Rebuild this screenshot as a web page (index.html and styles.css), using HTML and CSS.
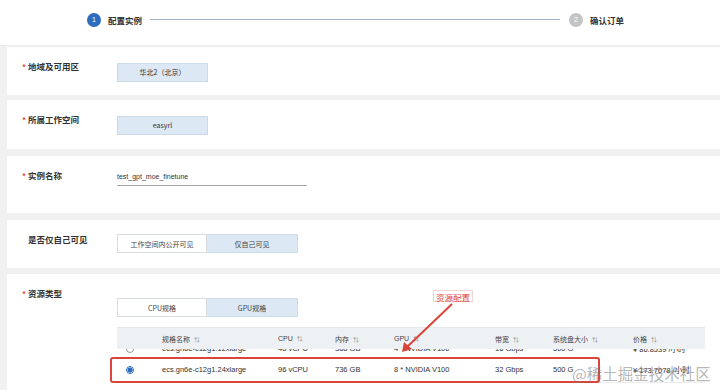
FILE: index.html
```html
<!DOCTYPE html>
<html lang="zh-CN">
<head>
  <meta charset="UTF-8" />
  <title>配置实例</title>
  <link rel="stylesheet" href="styles.css">
</head>
<body>
  <div class="steps">
    <div class="step active"><span class="step-num">1</span><span class="step-text">配置实例</span></div>
    <div class="step-line"></div>
    <div class="step"><span class="step-num">2</span><span class="step-text">确认订单</span></div>
  </div>

  <div class="form">
    <div class="panel p-region">
      <div class="label"><i>*</i>地域及可用区</div>
      <div class="field"><button class="pick">华北2（北京）</button></div>
    </div>

    <div class="panel p-space">
      <div class="label"><i>*</i>所属工作空间</div>
      <div class="field"><button class="pick">easyrl</button></div>
    </div>

    <div class="panel p-name">
      <div class="label"><i>*</i>实例名称</div>
      <div class="field"><div class="text-input">test_gpt_moe_finetune</div></div>
    </div>

    <div class="panel p-visible">
      <div class="label">是否仅自己可见</div>
      <div class="field">
        <div class="segment">
          <button>工作空间内公开可见</button>
          <button class="on">仅自己可见</button>
        </div>
      </div>
    </div>

    <div class="panel p-res">
      <div class="label"><i>*</i>资源类型</div>
      <div class="field res-field">
        <div class="segment">
          <button>CPU规格</button>
          <button class="on">GPU规格</button>
        </div>
        <div class="spec-table">
          <div class="row head">
            <span></span>
            <span>规格名称 <em>⇅</em></span>
            <span>CPU <em>⇅</em></span>
            <span>内存 <em>⇅</em></span>
            <span>GPU <em>⇅</em></span>
            <span>带宽 <em>⇅</em></span>
            <span>系统盘大小 <em>⇅</em></span>
            <span>价格 <em>⇅</em></span>
          </div>
          <div class="clip">
            <div class="row">
              <span><b class="radio"></b></span>
              <span>ecs.gn6e-c12g1.12xlarge</span>
              <span>48 vCPU</span>
              <span>368 GB</span>
              <span>4 * NVIDIA V100</span>
              <span>16 Gbps</span>
              <span>500 G</span>
              <span>¥ 86.8539 /小时</span>
            </div>
          </div>
          <div class="row">
            <span><b class="radio checked"></b></span>
            <span>ecs.gn6e-c12g1.24xlarge</span>
            <span>96 vCPU</span>
            <span>736 GB</span>
            <span>8 * NVIDIA V100</span>
            <span>32 Gbps</span>
            <span>500 G</span>
            <span>¥ 173.7078 /小时</span>
          </div>
          <div class="row"></div>
        </div>
      </div>
    </div>
  </div>

  <!-- annotation layer -->
  <div class="mark-box"></div>
  <div class="mark-tag">资源配置</div>
  <svg class="mark-arrow" width="720" height="390" viewBox="0 0 720 390">
    <line x1="452" y1="304" x2="407" y2="347" stroke="#d8453a" stroke-width="2" />
    <polygon points="402,352 404,342 412,349" fill="#d8453a" />
  </svg>
  <div class="watermark">@稀土掘金技术社区</div>
</body>
</html>
```

FILE: styles.css
```css
* { margin: 0; padding: 0; box-sizing: border-box; }
body {
  font-family: "Liberation Sans", "Noto Sans CJK SC", sans-serif;
  background: #f1f1f1;
  color: #333;
  width: 720px;
  height: 390px;
  overflow: hidden;
}
button { font-family: inherit; cursor: pointer; }

.steps {
  height: 46px;
  background: #fff;
  display: flex;
  align-items: center;
  padding: 0 0 6px 87px;
  border-bottom: 1px solid #ececec;
}
.step { display: flex; align-items: center; gap: 7px; }
.step-num {
  width: 14px; height: 14px; border-radius: 50%;
  background: #c4c4c4; color: #fff;
  font-size: 7px; line-height: 14px; text-align: center;
}
.step.active .step-num { background: #2c6cbf; }
.step-text {
  font-family: "Noto Sans CJK SC", sans-serif;
  font-size: 8.5px; font-weight: 700; color: #333;
}
.step-line {
  width: 410px; height: 1px; background: #9fb3cc;
  margin: 0 9px 0 8px;
}

.form {
  padding: 1px 0 0 7px;
  display: flex;
  flex-direction: column;
}
.panel {
  background: #fff;
  display: flex;
  padding: 14px 0 0 15px;
}
.p-region { height: 48px; }
.p-space { height: 49px; margin-top: 5px; }
.p-name { height: 57px; margin-top: 7px; }
.p-visible { height: 48px; margin-top: 7px; }
.p-res { height: 120px; margin-top: 6px; }

.label {
  width: 95px;
  font-family: "Noto Sans CJK SC", sans-serif;
  font-size: 8.5px;
  font-weight: 700;
  line-height: 11px;
  color: #333;
  padding-left: 6px;
  position: relative;
}
.label i {
  position: absolute; left: 0; top: 0;
  font-style: normal; color: #e04848; font-size: 8px;
}

.pick {
  width: 91px; height: 19px;
  background: #dce8f4;
  border: 1px solid #cbd9e8;
  font-family: "Noto Sans CJK SC", sans-serif;
  font-size: 7px; color: #333;
}

.text-input {
  width: 190px;
  margin-top: 3px;
  padding-bottom: 5px;
  border-bottom: 1px solid #a4a4a4;
  font-size: 7px;
  color: #333;
}

.segment { display: flex; }
.segment button {
  width: 90px; height: 19px;
  background: #fff;
  border: 1px solid #d8dde3;
  font-family: "Noto Sans CJK SC", sans-serif;
  font-size: 7px; color: #444;
}
.segment button + button { border-left: none; width: 91px; }
.segment button.on { background: #dce8f4; border-color: #cfdbe7; }

.res-field { padding-top: 10px; }
.spec-table {
  width: 588px;
  margin-top: 10px;
  border-top: 1px solid #e4e7eb;
  font-size: 7.5px;
  color: #333;
}
.row {
  display: grid;
  grid-template-columns: 45px 116px 57px 59px 101px 58px 80px 1fr;
  align-items: center;
  height: 26px;
  border-bottom: 1px solid #eceef1;
  background: #fff;
}
.row.head {
  height: 21px;
  background: #eef1f4;
  border-bottom: none;
  font-family: "Liberation Sans", "Noto Sans CJK SC", sans-serif;
  font-size: 7px;
  color: #444;
}
.row.head em { font-style: normal; font-size: 6px; color: #888; margin-left: 2px; }
.row span:first-child { display: flex; justify-content: center; padding-right: 19px; }
.clip { height: 8px; overflow: hidden; }
.clip .row { margin-top: -13px; }

.radio {
  display: block;
  width: 8px; height: 8px;
  border: 1px solid #999; border-radius: 50%;
  background: #fff;
}
.radio.checked {
  border-color: #2c6cbf;
  background: radial-gradient(circle, #2c6cbf 0 2.3px, #fff 2.8px);
}

.mark-box {
  position: absolute; left: 110px; top: 357px;
  width: 490px; height: 26px;
  border: 2px solid #d8453a;
  border-radius: 3px;
}
.mark-tag {
  position: absolute; left: 433px; top: 290px;
  padding: 0 2px;
  height: 12px; line-height: 12px;
  background: #fff;
  border: 1px solid #f0d6d3;
  font-family: "Noto Sans CJK SC", sans-serif;
  font-size: 8.5px; color: #e0453a;
}
.mark-arrow { position: absolute; left: 0; top: 0; pointer-events: none; }
.watermark {
  position: absolute; left: 572px; top: 362px;
  font-family: "Noto Sans CJK SC", sans-serif;
  font-size: 15.5px; color: rgba(120,120,120,0.55);
  white-space: nowrap;
}
```
